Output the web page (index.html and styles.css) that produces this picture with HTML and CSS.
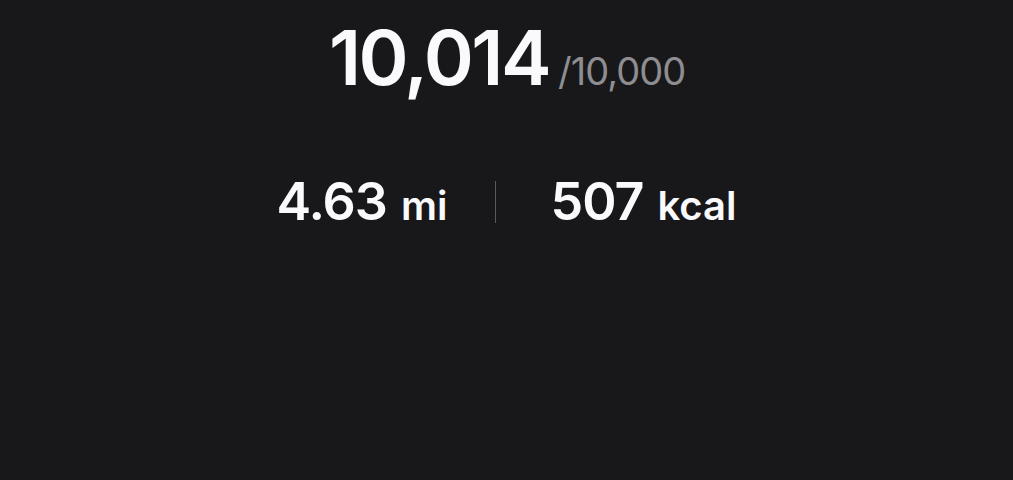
FILE: index.html
```html
<!DOCTYPE html>
<html>
<head>
<meta charset="utf-8">
<link rel="stylesheet" href="styles.css">
</head>
<body>
<main class="screen">
  <div class="steps">
    <span class="count">10,014</span>
    <span class="goal">/10,000</span>
  </div>
  <div class="stats">
    <div class="stat"><span class="val">4.63</span> <span class="unit">mi</span></div>
    <div class="divider"></div>
    <div class="stat"><span class="val">507</span> <span class="unit">kcal</span></div>
  </div>
</main>
</body>
</html>
```
FILE: styles.css
```css
html, body {
  margin: 0;
  padding: 0;
  background: #18181a;
}
.screen {
  width: 1013px;
  height: 480px;
  font-family: Inter, "Noto Sans", sans-serif;
  color: #fafafc;
  display: flex;
  flex-direction: column;
  align-items: center;
}
.steps {
  margin-top: 11px;
  display: flex;
  align-items: baseline;
  gap: 9px;
  margin-left: 1px;
}
.count {
  font-size: 76px;
  font-weight: 600;
  letter-spacing: -2.5px;
  line-height: 92px;
}
.goal {
  font-size: 38px;
  font-weight: 400;
  color: #8e8e92;
  letter-spacing: -1px;
}
.stats {
  margin-top: 67px;
  display: flex;
  align-items: center;
}
.stat {
  display: flex;
  align-items: baseline;
  gap: 14px;
}
.val {
  font-size: 52px;
  font-weight: 600;
  letter-spacing: -1px;
}
.unit {
  font-size: 40px;
  font-weight: 600;
}
.divider {
  width: 1px;
  height: 42px;
  background: #5a5a5e;
  margin: 0 54px 0 48px;
}
```
